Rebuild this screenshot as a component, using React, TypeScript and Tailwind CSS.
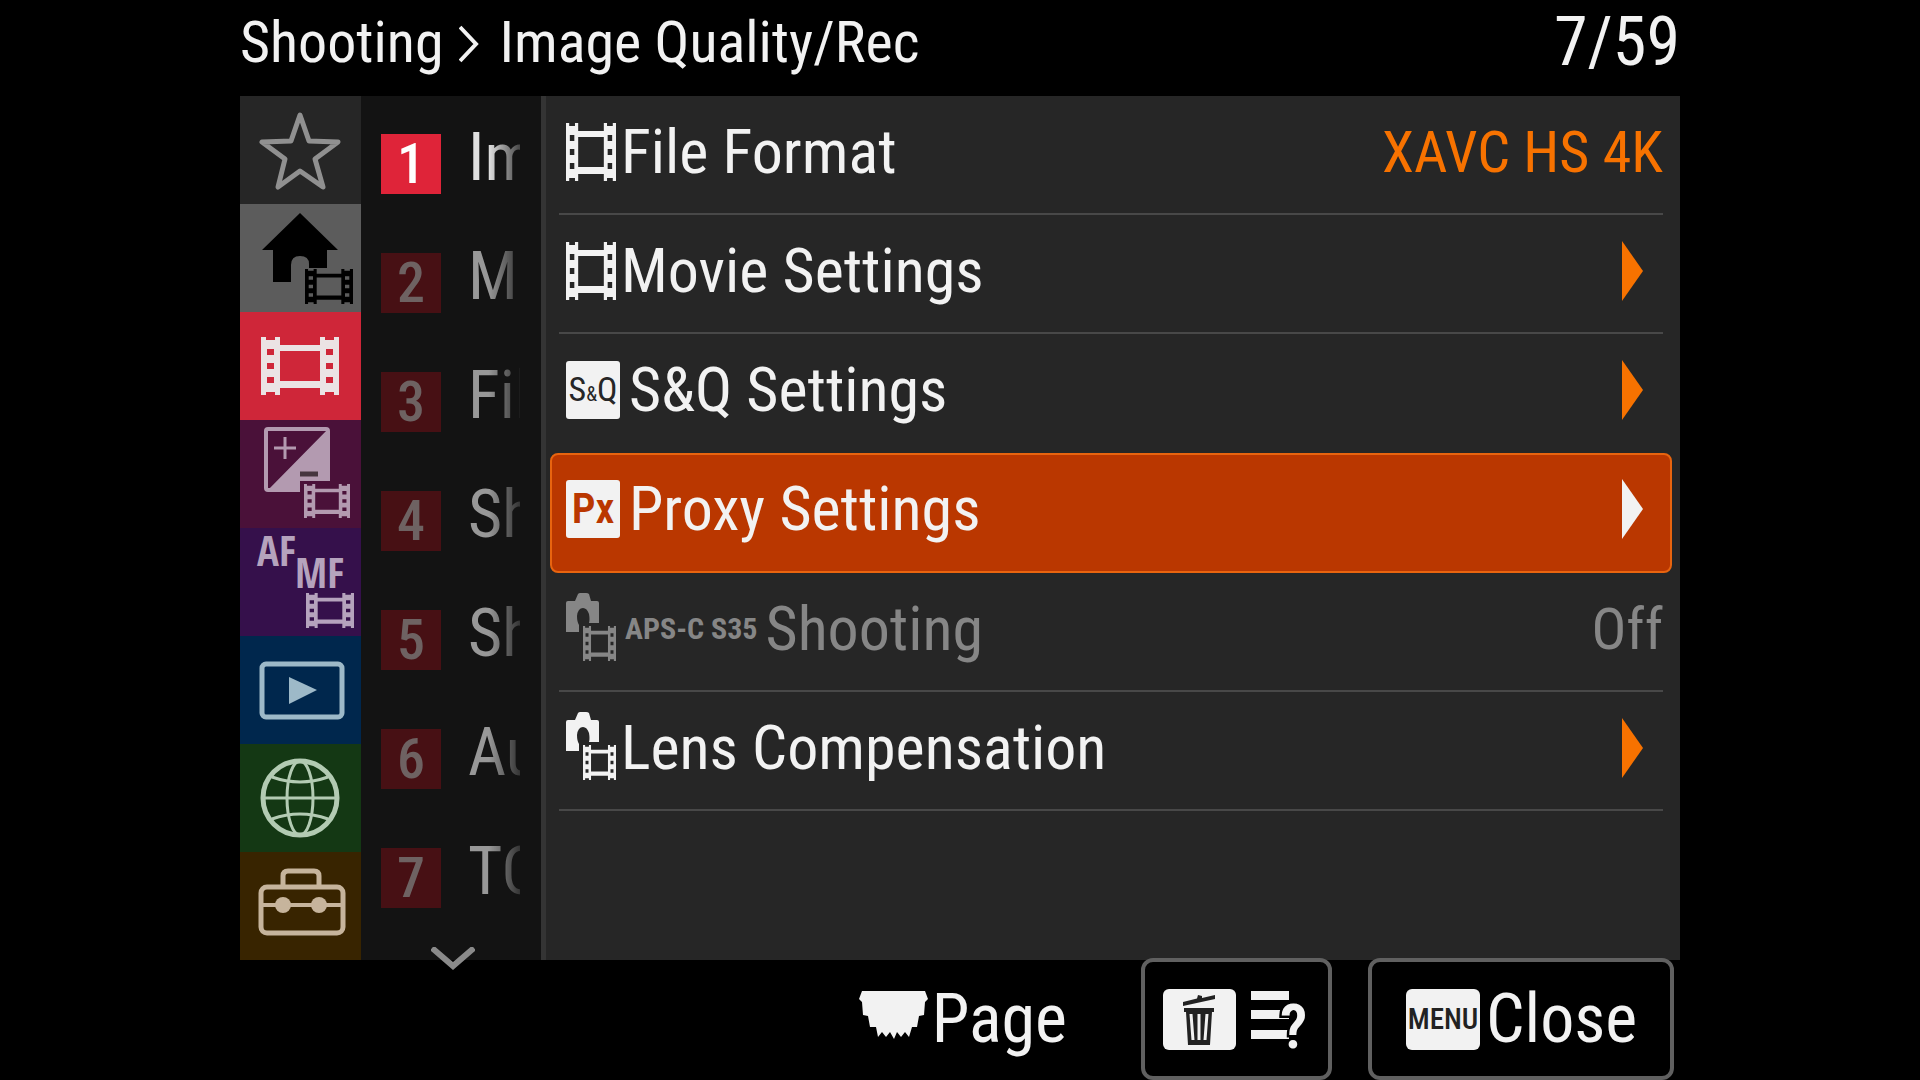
import { useState } from 'react'
import type { ReactNode } from 'react'

const FILM_PATH =
  'M0 0H5V3H14V0H19V8H59V0H64V3H73V0H78V58H73V55H64V58H59V51H19V58H14V55H5V58H0Z' +
  'M19 14V44H59V14Z' +
  'M6 12H13V18H6ZM6 26H13V32H6ZM6 40H13V46H6Z' +
  'M65 12H72V18H65ZM65 26H72V32H65ZM65 40H72V46H65Z'

interface FilmProps {
  x?: number
  y?: number
  width: number
  height: number
}

function Film({ x, y, width, height }: FilmProps) {
  return (
    <svg x={x} y={y} width={width} height={height} viewBox="0 0 78 58" preserveAspectRatio="none">
      <path d={FILM_PATH} fill="currentColor" fillRule="evenodd" />
    </svg>
  )
}

function CameraFilm() {
  return (
    <svg width="50" height="68" viewBox="0 0 50 68" className="mb-1 shrink-0" aria-hidden="true">
      <path
        d="M0 10Q0 8 2 8H9L12 1Q13 0 14 0H20Q22 0 23 1L25 8H31Q33 8 33 10V30H23Q24 27 23 21Q21 15 17 15Q12 15 11 23Q11 29 13 32V39H0Z"
        fill="currentColor"
      />
      <Film x={17} y={33} width={33} height={35} />
    </svg>
  )
}

function TabIcon({ children }: { children: ReactNode }) {
  return (
    <svg viewBox="0 0 121 108" className="h-[108px] w-full" aria-hidden="true">
      {children}
    </svg>
  )
}

interface Tab {
  label: string
  className: string
  icon: ReactNode
}

const tabs: Tab[] = [
  {
    label: 'My Menu',
    className: 'bg-[#262626] text-[#909090]',
    icon: (
      <path
        d="M60 19L69 45L98 46L75 63L83 91L60 75L38 91L45 63L22 46L51 45Z"
        fill="none"
        stroke="currentColor"
        strokeWidth="5"
        strokeLinejoin="round"
      />
    ),
  },
  {
    label: 'Main',
    className: 'bg-[#5c5c5c] text-black',
    icon: (
      <>
        <path d="M60 9L98 46H87V64H69V60Q69 52 60 52Q51 52 51 61V78H33V46H22Z" fill="currentColor" />
        <Film x={65} y={65} width={48} height={35} />
      </>
    ),
  },
  {
    label: 'Shooting',
    className: 'bg-[#cf2639] text-[#ebe3e4]',
    icon: <Film x={21} y={25} width={78} height={58} />,
  },
  {
    label: 'Exposure/Color',
    className: 'bg-[#4a1139] text-[#b39ab0]',
    icon: (
      <>
        <path d="M60 70H28Q26 70 26 68V11Q26 9 28 9H86Q88 9 88 11V61" fill="none" stroke="currentColor" strokeWidth="4" />
        <path d="M88 9V61H60V71H27Z" fill="currentColor" />
        <path d="M34 28H56M45 17V39" stroke="currentColor" strokeWidth="3" />
        <path d="M60 54H78" stroke="#46363f" strokeWidth="5" />
        <Film x={64} y={64} width={46} height={34} />
      </>
    ),
  },
  {
    label: 'Focus',
    className: 'bg-[#35104b] text-[#b5a3bd]',
    icon: (
      <>
        <text x="17" y="38" fontSize="41" fontWeight="700" fill="currentColor" fontFamily='"Open Sans Condensed", sans-serif'>
          AF
        </text>
        <text x="55" y="60" fontSize="41" fontWeight="700" fill="currentColor" fontFamily='"Open Sans Condensed", sans-serif'>
          MF
        </text>
        <Film x={66} y={65} width={48} height={35} />
      </>
    ),
  },
  {
    label: 'Playback',
    className: 'bg-[#00274d] text-[#9db9c8]',
    icon: (
      <>
        <rect x="22" y="28" width="80" height="53" rx="4" fill="none" stroke="currentColor" strokeWidth="5" />
        <path d="M49 41L77 54L49 68Z" fill="currentColor" />
      </>
    ),
  },
  {
    label: 'Network',
    className: 'bg-[#143814] text-[#b3cbb3]',
    icon: (
      <g fill="none" stroke="currentColor" strokeWidth="3">
        <circle cx="60" cy="54" r="37" strokeWidth="5" />
        <ellipse cx="60" cy="54" rx="13" ry="37" />
        <path d="M23 54H97M32 33Q60 43 88 33M32 75Q60 65 88 75" />
      </g>
    ),
  },
  {
    label: 'Setup',
    className: 'bg-[#382400] text-[#c6b49c]',
    icon: (
      <>
        <g fill="none" stroke="currentColor" strokeWidth="4">
          <rect x="21" y="35" width="82" height="46" rx="6" strokeWidth="5" />
          <path d="M43 35V24Q43 19 48 19H74Q79 19 79 24V35" strokeWidth="5" />
          <path d="M21 53H103" />
        </g>
        <circle cx="43" cy="53" r="8" fill="currentColor" />
        <circle cx="79" cy="53" r="8" fill="currentColor" />
      </>
    ),
  },
]

const groups = ['Im', 'Me', 'Fil', 'Sh', 'Sh', 'Au', 'TC']

interface Row {
  id: string
  icon: ReactNode
  label: ReactNode
  value?: string
  disabled?: boolean
}

function Badge({ children }: { children: ReactNode }) {
  return (
    <span className="mr-1 flex h-[58px] w-[54px] shrink-0 items-center justify-center rounded-[3px] bg-[#f2f2f2]">
      {children}
    </span>
  )
}

const rows: Row[] = [
  { id: 'format', icon: <Film width={50} height={58} />, label: 'File Format', value: 'XAVC HS 4K' },
  { id: 'movie', icon: <Film width={50} height={58} />, label: 'Movie Settings' },
  {
    id: 'sq',
    icon: (
      <Badge>
        <span className="text-[34px] leading-none text-[#262626]">
          S<span className="text-xl">&amp;</span>Q
        </span>
      </Badge>
    ),
    label: 'S&Q Settings',
  },
  {
    id: 'proxy',
    icon: (
      <Badge>
        <span className="text-[42px] font-semibold leading-none text-[#ba3700]">Px</span>
      </Badge>
    ),
    label: 'Proxy Settings',
  },
  {
    id: 'apsc',
    icon: <CameraFilm />,
    label: (
      <span className="ml-1 flex items-center gap-2">
        <span className="text-[30px] font-bold">APS-C S35</span>
        Shooting
      </span>
    ),
    value: 'Off',
    disabled: true,
  },
  { id: 'lens', icon: <CameraFilm />, label: 'Lens Compensation' },
]

export default function App() {
  const [tab, setTab] = useState('Shooting')
  const [group, setGroup] = useState(0)
  const [selected, setSelected] = useState('proxy')

  return (
    <div className="min-h-screen bg-black font-['Roboto_Condensed',Roboto,sans-serif] text-[#f2f2f2]">
      <div className="mx-auto flex min-h-screen w-3/4 flex-col">
        <header className="flex h-24 shrink-0 items-center justify-between pb-3 leading-none">
          <h1 className="flex items-center text-[58px]">
            Shooting
            <svg width="20" height="38" viewBox="0 0 20 38" className="mt-1 mr-5 ml-4" aria-hidden="true">
              <path d="M1 2L17 19L1 36" fill="none" stroke="currentColor" strokeWidth="4" />
            </svg>
            Image Quality/Rec
          </h1>
          <span className="text-[68px]">7/59</span>
        </header>

        <div className="flex flex-1">
          <nav className="flex w-[121px] shrink-0 flex-col">
            {tabs.map((t) => (
              <button
                key={t.label}
                type="button"
                aria-label={t.label}
                aria-pressed={tab === t.label}
                onClick={() => setTab(t.label)}
                className={`flex flex-1 items-center ${t.className}`}
              >
                <TabIcon>{t.icon}</TabIcon>
              </button>
            ))}
          </nav>

          <div className="flex h-[864px] w-[180px] shrink-0 flex-col bg-[#131313]">
            {groups.map((name, i) => (
              <button
                key={i}
                type="button"
                onClick={() => setGroup(i)}
                className="flex h-[119px] shrink-0 items-center pt-4 pl-5"
              >
                <span
                  className={`flex size-[60px] shrink-0 items-center justify-center text-[56px] font-medium leading-none ${
                    i === group ? 'bg-[#df2439] text-white' : 'bg-[#471014] text-[#6e6262]'
                  }`}
                >
                  {i + 1}
                </span>
                <span
                  className={`mb-3 ml-[27px] w-[52px] overflow-hidden text-left text-[66px] leading-[78px] [mask-image:linear-gradient(to_right,black_40%,transparent_120%)] ${
                    i === group ? 'text-[#e0e0e0]' : 'text-[#989898]'
                  }`}
                >
                  {name}
                </span>
              </button>
            ))}
            <svg width="44" height="24" viewBox="0 0 44 24" className="mt-[18px] ml-[70px] shrink-0" aria-hidden="true">
              <path d="M1 1L22 19L43 1" fill="none" stroke="#8a8a8a" strokeWidth="6" />
            </svg>
          </div>

          <main className="min-w-0 flex-1 border-l-[5px] border-[#343434] bg-[#262626] pr-2 pl-1">
            {rows.map((row, i) => {
              const active = row.id === selected
              const beforeActive = rows[i + 1]?.id === selected
              return (
                <button
                  key={row.id}
                  type="button"
                  disabled={row.disabled}
                  onClick={() => setSelected(row.id)}
                  className={`flex w-full items-stretch ${
                    active
                      ? 'h-[120px] rounded-lg border-2 border-[#e8640f] bg-[#ba3700] px-[7px]'
                      : 'h-[119px] pr-[9px] pl-[9px]'
                  } ${row.disabled ? 'text-[#868686]' : ''}`}
                >
                  <span
                    className={`flex flex-1 items-center border-b-2 pb-1.5 pl-[7px] text-[62px] leading-none ${
                      active || beforeActive ? 'border-transparent' : 'border-[#484848]'
                    }`}
                  >
                    {row.icon}
                    <span className="ml-[5px] whitespace-nowrap">{row.label}</span>
                    {row.value ? (
                      <span className={`ml-auto whitespace-nowrap text-[58px] ${row.disabled ? '' : 'text-[#f77200]'}`}>
                        {row.value}
                      </span>
                    ) : (
                      <svg
                        width="21"
                        height="60"
                        viewBox="0 0 21 60"
                        className={`ml-auto mr-5 ${active ? 'text-[#f2f2f2]' : 'text-[#f77200]'}`}
                        aria-hidden="true"
                      >
                        <path d="M0 0L21 30L0 60Z" fill="currentColor" />
                      </svg>
                    )}
                  </span>
                </button>
              )
            })}
          </main>
        </div>

        <footer className="z-10 -mt-0.5 flex h-[122px] shrink-0 items-stretch justify-end pr-1.5 text-[68px] leading-none">
          <div className="mr-[74px] flex items-center gap-1">
            <svg width="69" height="48" viewBox="0 0 69 48" className="mb-2" aria-hidden="true">
              <path
                d="M3 0H66L69 8L66 11L65 24L60 25L58 36L53 36L50 46L46 41L42 46L38 41L35 48L31 41L27 46L23 41L19 46L17 36L11 36L9 25L4 24L3 11L0 8Z"
                fill="currentColor"
              />
            </svg>
            Page
          </div>
          <button
            type="button"
            aria-label="Help"
            className="mr-9 flex w-[191px] items-center gap-[15px] rounded-xl border-4 border-[#606060] pl-[18px]"
          >
            <svg width="73" height="61" viewBox="0 0 73 61" aria-hidden="true">
              <rect width="73" height="61" rx="6" fill="#f2f2f2" />
              <path d="M20 13L34 9.500L35 6L39 7V9L52 6V10L20 17Z" fill="#222" />
              <path d="M21 19H51V23H49L47 56H25L23 23H21Z" fill="#222" />
              <path d="M28 25L30 51M36 25V51M44 25L42 51" stroke="#f2f2f2" strokeWidth="3" />
            </svg>
            <svg width="56" height="60" viewBox="0 0 56 60" aria-hidden="true">
              <path d="M0 2H38V11H0ZM0 21H38V30H0ZM0 41H38V50H0Z" fill="currentColor" />
              <text
                x="29"
                y="59"
                fontSize="62"
                fontWeight="600"
                fill="currentColor"
                stroke="#000"
                strokeWidth="5"
                paintOrder="stroke"
              >
                ?
              </text>
            </svg>
          </button>
          <button
            type="button"
            className="flex w-[306px] items-center gap-1.5 rounded-xl border-4 border-[#606060] pl-[34px]"
          >
            <span className="flex h-[61px] w-[74px] items-center justify-center rounded-md bg-[#f2f2f2] text-[29px] font-medium leading-none text-[#222]">
              MENU
            </span>
            Close
          </button>
        </footer>
      </div>
    </div>
  )
}
